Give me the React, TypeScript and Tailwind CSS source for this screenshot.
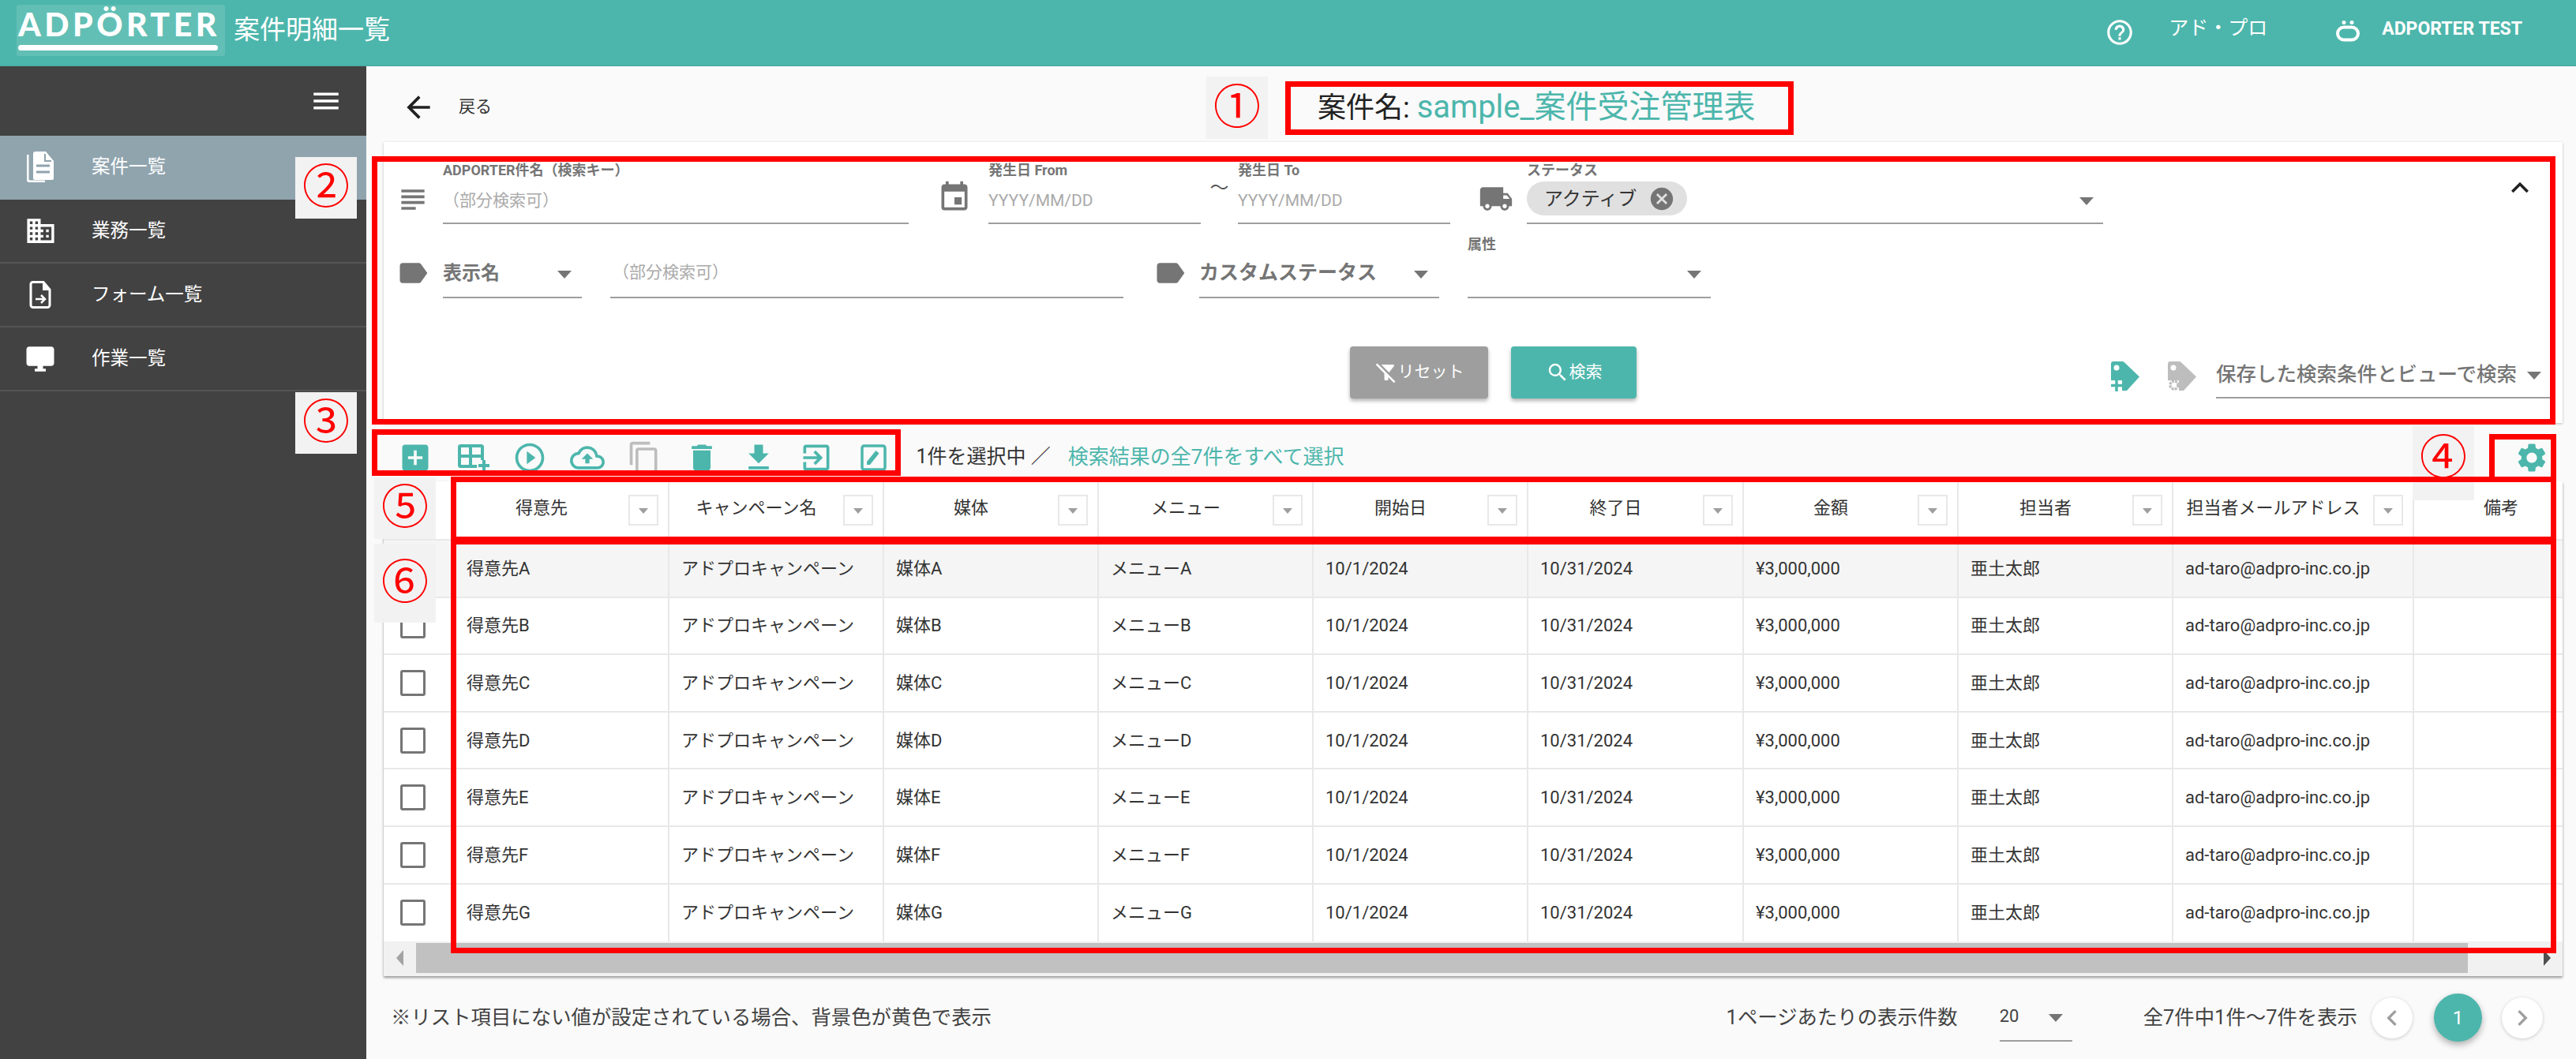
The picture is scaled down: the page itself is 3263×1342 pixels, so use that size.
import {
  MdAddBox,
  MdArrowBack,
  MdCancel,
  MdChevronLeft,
  MdChevronRight,
  MdContentCopy,
  MdDelete,
  MdDesktopWindows,
  MdDomain,
  MdEvent,
  MdExitToApp,
  MdExpandLess,
  MdFileDownload,
  MdFilterAltOff,
  MdHelpOutline,
  MdLabel,
  MdLocalShipping,
  MdMenu,
  MdOutlineCloudUpload,
  MdPlayCircleOutline,
  MdSearch,
  MdSettings,
  MdSubject,
} from "react-icons/md";

const columns = [
  { label: "得意先", width: "w-[272px]" },
  { label: "キャンペーン名", width: "w-[272px]" },
  { label: "媒体", width: "w-[272px]" },
  { label: "メニュー", width: "w-[272px]" },
  { label: "開始日", width: "w-[272px]" },
  { label: "終了日", width: "w-[273px]" },
  { label: "金額", width: "w-[272px]" },
  { label: "担当者", width: "w-[272px]" },
  { label: "担当者メールアドレス", width: "w-[305px]" },
];

const letters = ["A", "B", "C", "D", "E", "F", "G"];

function Arrow({ className = "" }: { className?: string }) {
  return <span className={`w-0 h-0 border-x-[9px] border-x-transparent border-t-[10px] border-t-[#757575] ${className}`} />;
}

function TableAddIcon() {
  return (
    <svg width="44" height="44" viewBox="0 0 44 44" fill="none" stroke="#4db6ac" strokeWidth="4">
      <path d="M27 33H6.500A1.500 1.500 0 0 1 5 31.500V8.500A1.500 1.500 0 0 1 6.500 7h26A1.500 1.500 0 0 1 34 8.500V25" />
      <path d="M5 20h29M19 7v26" />
      <path d="M36 25v14M29 32h14" />
    </svg>
  );
}

function EditBoxIcon() {
  return (
    <svg width="44" height="44" viewBox="0 0 44 44" fill="none">
      <rect x="8" y="7" width="29" height="30" rx="2.500" stroke="#4db6ac" strokeWidth="3.500" />
      <path d="M14 31v-4l11.500-14 4 3.500L18 31z" fill="#4db6ac" />
    </svg>
  );
}

function TagIcon({ color, gear }: { color: string; gear?: boolean }) {
  return (
    <svg width="37" height="38" viewBox="0 0 37 38">
      <path d="M3 0h11c1.500 0 2.500.6 3.500 1.800L36 19.500 20 37H14V24H0V3a3 3 0 0 1 3-3z" fill={color} />
      <circle cx="7" cy="8" r="3.500" fill="#fff" />
      {gear ? (
        <circle cx="8" cy="30" r="5" fill="none" stroke={color} strokeWidth="3.500" strokeDasharray="3 1" />
      ) : (
        <path d="M7 23v15M0 30.500h15" stroke={color} strokeWidth="3.500" />
      )}
    </svg>
  );
}

function DocIcon() {
  return (
    <svg width="34" height="40" viewBox="0 0 34 40">
      <path d="M0 4v32a3 3 0 0 0 3 3h20v-2.500H4A1.500 1.500 0 0 1 2.500 35V4z" fill="#fff" />
      <path d="M8 3a3 3 0 0 1 3-3h13l10 12v22a2 2 0 0 1-2 2H10a2 2 0 0 1-2-2z" fill="#fff" />
      <path d="M23 3v9h8" fill="none" stroke="#90a4ae" strokeWidth="2" />
      <path d="M12 18h17M12 26h17" stroke="#90a4ae" strokeWidth="3" />
    </svg>
  );
}

function FormIcon() {
  return (
    <svg width="28" height="35" viewBox="0 0 28 35" fill="none">
      <path d="M2 4a2.500 2.500 0 0 1 2.500-2.500H18L26 11v19.500a3 3 0 0 1-3 3H5a3 3 0 0 1-3-3z" stroke="#fff" strokeWidth="3" />
      <path d="M17 1v11h9z" fill="#fff" />
      <path d="M8 23h11M15 18l5 5-5 5" stroke="#fff" strokeWidth="2.500" />
    </svg>
  );
}

function UserIcon() {
  return (
    <svg width="32" height="27" viewBox="0 0 32 27" fill="none">
      <circle cx="11" cy="2.500" r="2.500" fill="#fff" />
      <circle cx="21" cy="2.500" r="2.500" fill="#fff" />
      <rect x="3" y="8.500" width="26" height="16" rx="8" stroke="#fff" strokeWidth="4" />
    </svg>
  );
}

function Field({ label, width, children, line = true }: { label?: string; width: string; children?: React.ReactNode; line?: boolean }) {
  return (
    <div className={`${width} flex flex-col shrink-0`}>
      <div className="h-[22px] text-[18px] leading-[22px] font-bold text-[#757575] whitespace-nowrap">{label}</div>
      <div className={`h-[57px] flex items-center ${line ? "border-b-2 border-[#9e9e9e]" : ""}`}>{children}</div>
    </div>
  );
}

function Placeholder({ text }: { text: string }) {
  return <span className="text-[21px] text-[#aaaaaa] whitespace-nowrap">{text}</span>;
}

function Mark({ box }: { box: string }) {
  return <div className={`absolute border-[7px] border-[#ff0000] ${box}`} />;
}

function Badge({ n, box }: { n: string; box: string }) {
  return (
    <div className={`absolute bg-[#f2f2f2] flex items-center justify-center text-[#ff0000] text-[60px] leading-none ${box}`}>{n}</div>
  );
}

function Sidebar() {
  const items = [
    { label: "案件一覧", icon: <DocIcon />, active: true },
    { label: "業務一覧", icon: <MdDomain size={41} /> },
    { label: "フォーム一覧", icon: <FormIcon /> },
    { label: "作業一覧", icon: <MdDesktopWindows size={42} /> },
  ];
  return (
    <aside className="w-[464px] shrink-0 bg-[#424242] text-white">
      <div className="h-[88px] flex items-center justify-end pr-[30px]">
        <MdMenu size={42} />
      </div>
      {items.map((item) => (
        <div
          key={item.label}
          className={`h-[81px] flex items-center border-b-2 ${item.active ? "bg-[#90a4ae] border-[#90a4ae]" : "border-[#555555]"}`}
        >
          <div className="w-[116px] pl-[26px] pr-[40px] flex justify-center">{item.icon}</div>
          <span className="text-[23.500px]">{item.label}</span>
        </div>
      ))}
    </aside>
  );
}

function FilterCard() {
  return (
    <section className="ml-[22px] mr-[17px] h-[356px] shrink-0 bg-white shadow-[0_1px_3px_rgba(0,0,0,0.25)] pt-[25px] pl-[15px]">
      <div className="flex items-end">
        <MdSubject size={44} className="text-[#757575] mb-[9px] shrink-0" />
        <div className="ml-[16px]" />
        <Field label="ADPORTER件名（検索キー）" width="w-[590px]">
          <Placeholder text="（部分検索可）" />
        </Field>
        <MdEvent size={44} className="text-[#757575] ml-[36px] mb-[12px] shrink-0" />
        <div className="ml-[21px]" />
        <Field label="発生日 From" width="w-[269px]">
          <Placeholder text="YYYY/MM/DD" />
        </Field>
        <div className="w-[47px] self-start pt-[15px] text-center text-[24px] text-[#555555]">～</div>
        <Field label="発生日 To" width="w-[269px]">
          <Placeholder text="YYYY/MM/DD" />
        </Field>
        <MdLocalShipping size={44} className="text-[#757575] ml-[36px] mb-[10px] shrink-0" />
        <div className="ml-[17px]" />
        <Field label="ステータス" width="w-[730px]">
          <div className="h-[43px] w-[203px] mb-[6px] bg-[#e0e0e0] rounded-full flex items-center pl-[22px] pr-[15px] justify-between">
            <span className="text-[24px] text-[#333333]">アクティブ</span>
            <MdCancel size={34} className="text-[#757575]" />
          </div>
          <Arrow className="ml-auto mr-[12px]" />
        </Field>
        <MdExpandLess size={44} className="ml-auto mr-[32px] mb-[24px] text-[#212121] self-start mt-[11px]" />
      </div>

      <div className="flex items-end mt-[15px]">
        <MdLabel size={44} className="text-[#757575] mb-[10px] shrink-0" />
        <div className="ml-[16px]" />
        <Field width="w-[176px]">
          <span className="text-[24px] font-bold text-[#757575] mb-[5px]">表示名</span>
          <Arrow className="ml-auto mr-[13px] mb-[2px]" />
        </Field>
        <div className="ml-[36px]" />
        <Field width="w-[650px]">
          <span className="ml-[3px] mb-[5px]">
            <Placeholder text="（部分検索可）" />
          </span>
        </Field>
        <MdLabel size={44} className="text-[#757575] ml-[37px] mb-[10px] shrink-0" />
        <div className="ml-[15px]" />
        <Field width="w-[304px]">
          <span className="text-[25px] font-bold text-[#757575] whitespace-nowrap mb-[5px]">カスタムステータス</span>
          <Arrow className="ml-auto mr-[14px] mb-[2px]" />
        </Field>
        <div className="ml-[36px]" />
        <Field label="属性" width="w-[308px]">
          <Arrow className="ml-auto mr-[12px] mb-[2px]" />
        </Field>
      </div>

      <div className="flex items-start mt-[61px] pl-[1209px] pr-[15px]">
        <button className="w-[175px] h-[66px] bg-[#9e9e9e] text-white rounded-[4px] shadow-[0_3px_5px_rgba(0,0,0,0.3)] flex items-center justify-center text-[21px]">
          <MdFilterAltOff size={30} />
          リセット
        </button>
        <button className="ml-[29px] w-[159px] h-[66px] bg-[#4db6ac] text-white rounded-[4px] shadow-[0_3px_5px_rgba(0,0,0,0.3)] flex items-center justify-center text-[21px]">
          <MdSearch size={30} />
          検索
        </button>
        <div className="ml-auto flex items-start">
          <div className="mt-[19px]">
            <TagIcon color="#4db6ac" />
          </div>
          <div className="mt-[19px] ml-[35px]">
            <TagIcon color="#bdbdbd" gear />
          </div>
          <div className="ml-[24px] w-[424px] h-[66px] border-b-2 border-[#9e9e9e] flex items-center pt-[6px] text-[25.500px] font-medium text-[#757575]">
            <span className="whitespace-nowrap">保存した検索条件とビューで検索</span>
            <Arrow className="ml-auto mr-[12px] mt-[4px]" />
          </div>
        </div>
      </div>
    </section>
  );
}

function Toolbar() {
  const icons = [
    <MdAddBox size={44} className="text-[#4db6ac]" />,
    <TableAddIcon />,
    <MdPlayCircleOutline size={44} className="text-[#4db6ac]" />,
    <MdOutlineCloudUpload size={44} className="text-[#4db6ac]" />,
    <MdContentCopy size={44} className="text-[#bdbdbd]" />,
    <MdDelete size={44} className="text-[#4db6ac]" />,
    <MdFileDownload size={44} className="text-[#4db6ac]" />,
    <MdExitToApp size={44} className="text-[#4db6ac]" />,
    <EditBoxIcon />,
  ];
  return (
    <div className="h-[74px] shrink-0 flex items-start pt-[22px] pl-[26px] pr-[34px]">
      {icons.map((icon, i) => (
        <div key={i} className="w-[72.500px] h-[44px] flex items-center justify-center">
          {icon}
        </div>
      ))}
      <span className="ml-[18px] h-[40px] leading-[42px] text-[25px] text-[#333333] whitespace-nowrap">1件を選択中 ／</span>
      <span className="ml-[22px] h-[40px] leading-[42px] text-[26px] text-[#4db6ac] whitespace-nowrap">検索結果の全7件をすべて選択</span>
      <MdSettings size={44} className="ml-auto text-[#4db6ac]" />
    </div>
  );
}

function DataTable() {
  return (
    <section className="ml-[22px] mr-[17px] h-[627px] shrink-0 bg-white shadow-[0_2px_3px_rgba(0,0,0,0.4)] flex flex-col overflow-hidden">
      <div className="h-[75px] flex border-b-2 border-[#e8e8e8] text-[#333333] text-[22px] shrink-0">
        <div className="w-[88px] shrink-0" />
        {columns.map((col) => (
          <div key={col.label} className={`${col.width} flex items-center border-l-2 border-[#e8e8e8] pr-[12px] shrink-0`}>
            <span className="flex-1 text-center whitespace-nowrap pb-[6px]">{col.label}</span>
            <span className="w-[38px] h-[39px] border-2 border-[#e8e8e8] flex items-center justify-center">
              <span className="w-0 h-0 border-x-[6px] border-x-transparent border-t-[7px] border-t-[#9e9e9e] mt-[2px]" />
            </span>
          </div>
        ))}
        <div className="w-[222px] shrink-0 border-l-2 border-[#e8e8e8] flex items-center justify-center pb-[6px]">備考</div>
      </div>
      {letters.map((letter, i) => (
        <div
          key={letter}
          className={`h-[72.600px] shrink-0 flex items-stretch text-[22px] text-[#333333] ${i < 6 ? "border-b-2 border-[#e8e8e8]" : ""} ${i === 0 ? "bg-[#f5f5f5]" : ""}`}
        >
          <div className="w-[88px] shrink-0 flex items-center pl-[21px]">
            <span className="w-[32px] h-[33px] border-[3px] border-[#757575] rounded-[3px]" />
          </div>
          {[
            `得意先${letter}`,
            "アドプロキャンペーン",
            `媒体${letter}`,
            `メニュー${letter}`,
            "10/1/2024",
            "10/31/2024",
            "¥3,000,000",
            "亜土太郎",
            "ad-taro@adpro-inc.co.jp",
          ].map((text, j) => (
            <div key={j} className={`${columns[j].width} shrink-0 flex items-center px-[15px] border-l-2 border-[#e8e8e8] whitespace-nowrap`}>
              {text}
            </div>
          ))}
          <div className="w-[222px] shrink-0 border-l-2 border-[#e8e8e8]" />
        </div>
      ))}
      <div className="flex-1 flex bg-[#f1f1f1] items-stretch pt-[2px] pb-[4px]">
        <div className="w-[41px] flex items-center justify-center">
          <span className="w-0 h-0 border-y-[10px] border-y-transparent border-r-[9px] border-r-[#a3a3a3]" />
        </div>
        <div className="w-[2599px] bg-[#c1c1c1]" />
        <div className="flex-1 flex items-center justify-end pr-[15px]">
          <span className="w-0 h-0 border-y-[10px] border-y-transparent border-l-[9px] border-l-[#505050]" />
        </div>
      </div>
    </section>
  );
}

function Footer() {
  return (
    <div className="flex-1 flex items-center pl-[31px] pr-[42px] text-[25.400px] text-[#424242]">
      <span className="whitespace-nowrap">※リスト項目にない値が設定されている場合、背景色が黄色で表示</span>
      <span className="ml-auto whitespace-nowrap">1ページあたりの表示件数</span>
      <div className="ml-[53px] w-[92px] h-[56px] mt-[4px] flex items-center border-b-2 border-[#9e9e9e] text-[22px]">
        <span className="mb-[6px]">20</span>
        <Arrow className="ml-auto mr-[12px] mb-[2px]" />
      </div>
      <span className="ml-[90px] whitespace-nowrap">全7件中1件～7件を表示</span>
      <button className="ml-[18px] w-[52px] h-[52px] rounded-full bg-white shadow-[0_1px_4px_rgba(0,0,0,0.2)] flex items-center justify-center text-[#9e9e9e]">
        <MdChevronLeft size={40} />
      </button>
      <button className="ml-[27px] w-[61px] h-[61px] rounded-full bg-[#4db6ac] text-white shadow-[0_4px_8px_rgba(0,0,0,0.3)] text-[24px]">1</button>
      <button className="ml-[25px] w-[52px] h-[52px] rounded-full bg-white shadow-[0_1px_4px_rgba(0,0,0,0.2)] flex items-center justify-center text-[#9e9e9e]">
        <MdChevronRight size={40} />
      </button>
    </div>
  );
}

export default function App() {
  return (
    <div className="relative w-[3263px] h-[1342px] overflow-hidden flex flex-col bg-[#fafafa] [font-family:Roboto,'Noto_Sans_CJK_JP',sans-serif]">
      <header className="h-[84px] shrink-0 bg-[#4db6ac] border-b-2 border-[#49ada3] flex items-center pl-[21px] text-white">
        <div className="w-[264px] h-[65px] mb-[5px] bg-[#62bfb5] rounded-[3px] pl-[2px] flex flex-col items-start">
          <span className="text-[41px] leading-[50px] font-black tracking-[4.500px] [font-family:Lato,sans-serif] whitespace-nowrap">ADPÖRTER</span>
          <span className="w-[253px] h-[7px] bg-white rounded-full mt-[1px]" />
        </div>
        <span className="ml-[11px] text-[33px] mb-[6px]">案件明細一覧</span>
        <MdHelpOutline size={38} className="ml-auto" />
        <span className="ml-[43px] text-[25px] mb-[10px]">アド・プロ</span>
        <span className="ml-[86px] mb-[4px]">
          <UserIcon />
        </span>
        <span className="ml-[27px] mr-[68px] text-[23px] font-bold mb-[8px] whitespace-nowrap">ADPORTER TEST</span>
      </header>

      <div className="flex-1 flex min-h-0">
        <Sidebar />
        <main className="flex-1 min-w-0 flex flex-col">
          <div className="h-[96px] shrink-0 flex items-center pl-[44px] pt-[8px]">
            <MdArrowBack size={44} className="text-[#212121]" />
            <span className="ml-[29px] text-[21px] text-[#333333]">戻る</span>
            <span className="ml-[1046px] text-[36px] text-[#212121] whitespace-nowrap">
              案件名: <span className="text-[40px] text-[#4db6ac]">sample_案件受注管理表</span>
            </span>
          </div>
          <FilterCard />
          <Toolbar />
          <DataTable />
          <Footer />
        </main>
      </div>

      <Badge n="①" box="left-[1528px] top-[97px] w-[78px] h-[79px]" />
      <Badge n="②" box="left-[374px] top-[199px] w-[78px] h-[78px]" />
      <Badge n="③" box="left-[374px] top-[497px] w-[78px] h-[78px]" />
      <Badge n="④" box="left-[3056px] top-[534px] w-[78px] h-[100px] pb-[6px]" />
      <Badge n="⑤" box="left-[474px] top-[605px] w-[78px] h-[78px]" />
      <Badge n="⑥" box="left-[474px] top-[689px] w-[78px] h-[100px]" />

      <Mark box="left-[1628px] top-[103px] w-[644px] h-[68px]" />
      <Mark box="left-[471px] top-[198px] w-[2766px] h-[340px]" />
      <Mark box="left-[471px] top-[544px] w-[670px] h-[59px]" />
      <Mark box="left-[3153px] top-[550px] w-[85px] h-[61px]" />
      <Mark box="left-[571px] top-[604px] w-[2667px] h-[86px]" />
      <Mark box="left-[571px] top-[680px] w-[2667px] h-[528px]" />
    </div>
  );
}
